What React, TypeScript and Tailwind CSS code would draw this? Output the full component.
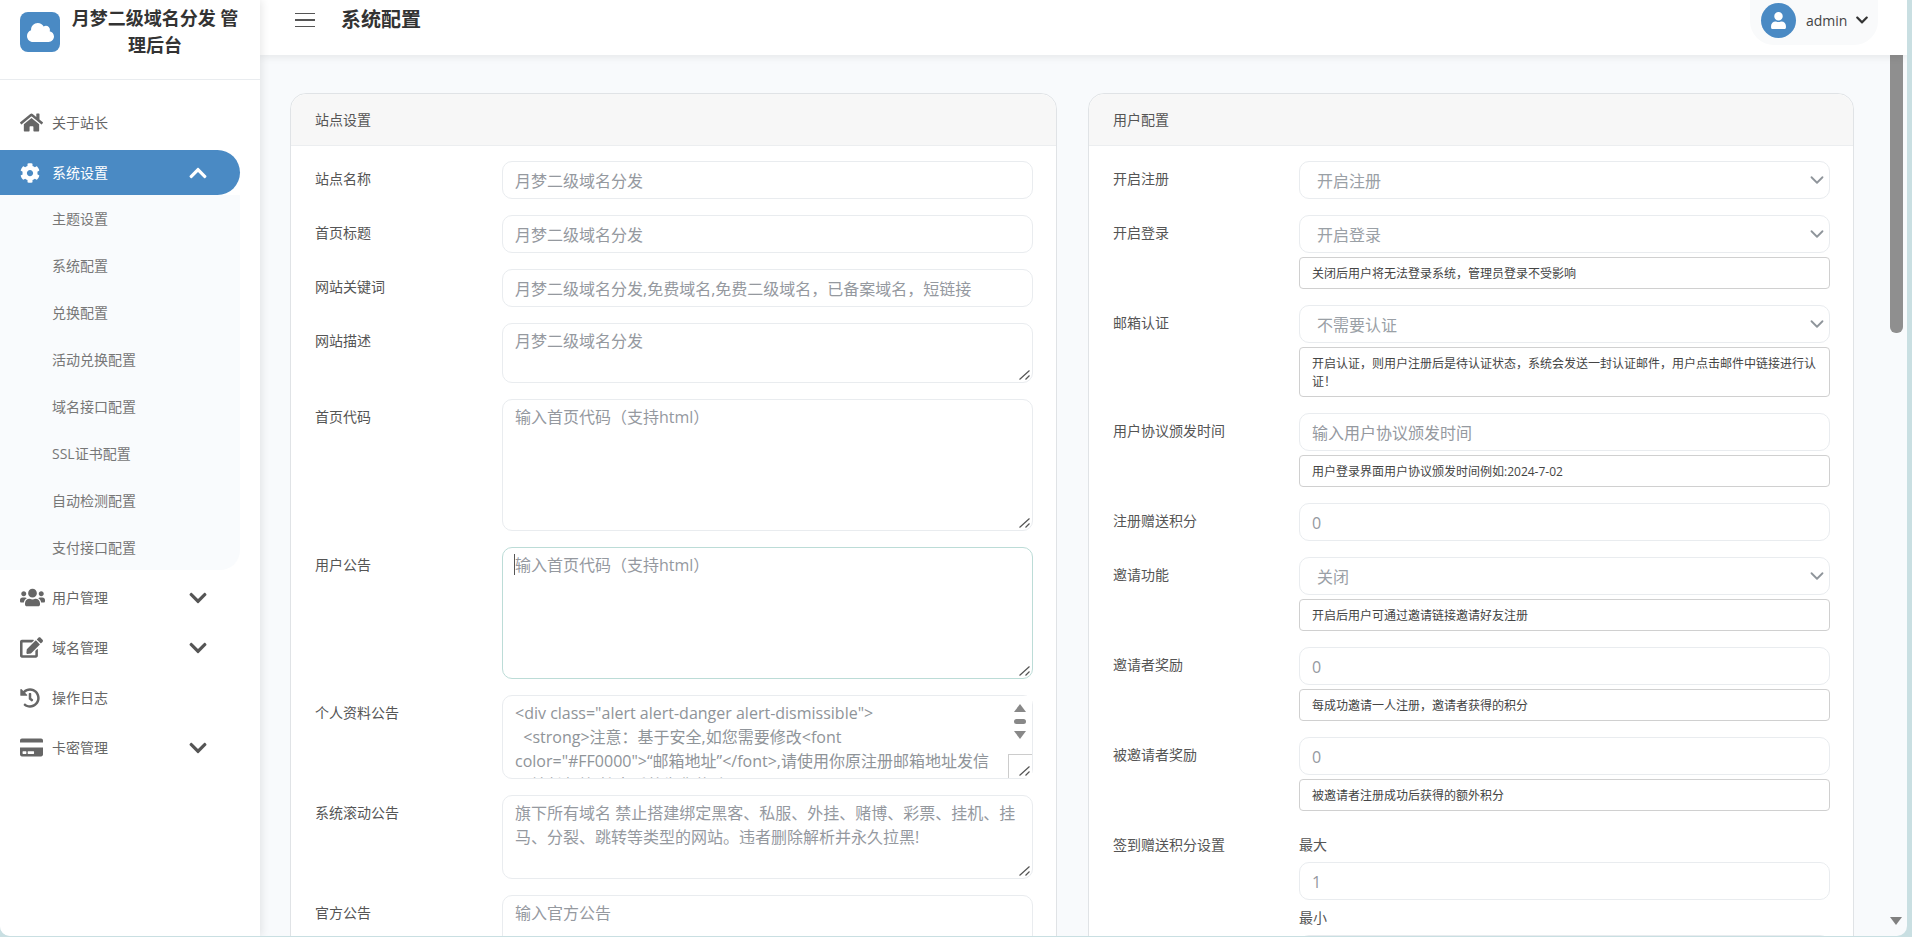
import {
  FaChevronDown,
  FaChevronUp,
  FaCloud,
  FaCog,
  FaCreditCard,
  FaEdit,
  FaHistory,
  FaHome,
  FaUser,
  FaUsers,
} from "react-icons/fa";
import { ChevronDown } from "lucide-react";

const subMenu = [
  "主题设置",
  "系统配置",
  "兑换配置",
  "活动兑换配置",
  "域名接口配置",
  "SSL证书配置",
  "自动检测配置",
  "支付接口配置",
];

const profileNotice = `<div class="alert alert-danger alert-dismissible">
  <strong>注意：基于安全,如您需要修改<font color="#FF0000">“邮箱地址”</font>,请使用你原注册邮箱地址发信至站长邮箱,核实后将为您修改。</strong>
</div>`;

const fieldClass =
  "block h-[38px] w-full rounded-[10px] border border-[#e9ecef] bg-white px-3 pt-[2px] text-base text-[#9aa0a6] outline-none placeholder:text-[#95999f]";
const areaClass =
  "block w-full resize-none rounded-[10px] border bg-white px-3 pt-[5px] text-base leading-6 text-[#8f9499] outline-none placeholder:text-[#95999f]";

const NavItem = ({
  icon,
  label,
  arrow,
}: {
  icon: React.ReactNode;
  label: string;
  arrow?: boolean;
}) => (
  <div className="mt-[5px] flex h-[45px] w-[240px] items-center pl-5 text-sm text-[#666]">
    <span className="flex w-8 items-center">{icon}</span>
    <span className="flex-1">{label}</span>
    {arrow && <FaChevronDown size={20} className="mr-[32px] text-[#555]" />}
  </div>
);

const Sidebar = () => (
  <aside className="relative z-20 flex h-full w-[260px] shrink-0 flex-col bg-white shadow-[2px_0_8px_rgba(0,0,0,0.09)]">
    <div className="flex h-[80px] items-start border-b border-[#e9ecef] pl-5 pt-[12px]">
      <div className="flex h-10 w-10 shrink-0 items-center justify-center rounded-lg bg-[#4a8ac4]">
        <FaCloud size={27} className="text-white" />
      </div>
      <div className="ml-[10px] -mt-[7px] w-[170px] text-center text-lg font-bold leading-[27px] text-[#333]">
        月梦二级域名分发 管理后台
      </div>
    </div>
    <nav className="pt-[15px]">
      <NavItem icon={<FaHome size={23} />} label="关于站长" />
      <div className="mt-[5px] flex h-[45px] w-[240px] items-center rounded-r-full bg-[#4a8ac4] pl-5 text-sm text-white">
        <span className="flex w-8 items-center">
          <FaCog size={20} />
        </span>
        <span className="flex-1">系统设置</span>
        <FaChevronUp size={20} className="mr-[32px]" />
      </div>
      <div className="h-[375px] w-[240px] rounded-br-[20px] bg-[#f9fbfd]">
        {subMenu.map((item) => (
          <div key={item} className="flex h-[47px] items-center pl-[52px] text-sm text-[#777]">
            {item}
          </div>
        ))}
      </div>
      <NavItem icon={<FaUsers size={25} />} label="用户管理" arrow />
      <NavItem icon={<FaEdit size={23} />} label="域名管理" arrow />
      <NavItem icon={<FaHistory size={20} />} label="操作日志" />
      <NavItem icon={<FaCreditCard size={23} />} label="卡密管理" arrow />
    </nav>
  </aside>
);

const Header = () => (
  <header className="relative z-10 flex h-[55px] shrink-0 items-start justify-between bg-white pl-[35px] pr-[29px] shadow-[0_2px_8px_rgba(0,0,0,0.08)]">
    <div className="flex h-10 items-center">
      <div className="flex w-5 flex-col gap-[5px]">
        <span className="h-[1.5px] bg-[#555]" />
        <span className="h-[1.5px] bg-[#555]" />
        <span className="h-[1.5px] bg-[#555]" />
      </div>
      <h1 className="ml-[26px] text-xl font-semibold text-[#333]">系统配置</h1>
    </div>
    <div className="flex h-[45px] w-[128px] items-start rounded-b-[24px] bg-[#f9fafb] pl-[11px] pt-[3px]">
      <div className="flex h-[35px] w-[35px] items-center justify-center rounded-full bg-[#4a8ac4]">
        <FaUser size={17} className="text-white" />
      </div>
      <span className="ml-[10px] mt-[8px] text-sm text-[#444]">admin</span>
      <FaChevronDown size={14} className="ml-[8px] mt-[10px] text-[#333]" />
    </div>
  </header>
);

const Card = ({ title, children }: { title: string; children: React.ReactNode }) => (
  <section className="rounded-t-[16px] border border-[#e0e3e6] bg-white">
    <div className="flex h-[52px] items-center rounded-t-[16px] border-b border-[#eceef0] bg-[#f7f7f7] pl-[24px] text-sm text-[#555]">
      {title}
    </div>
    <div className="flex flex-col gap-4 pb-10 pl-[24px] pr-[23px] pt-[15px]">{children}</div>
  </section>
);

const Row = ({
  label,
  width,
  children,
}: {
  label: string;
  width: string;
  children: React.ReactNode;
}) => (
  <div className="flex items-start">
    <label className={`${width} shrink-0 pt-[7px] text-sm leading-[21px] text-[#555]`}>{label}</label>
    <div className="min-w-0 flex-1">{children}</div>
  </div>
);

const Select = ({ value }: { value: string }) => (
  <div className="relative">
    <select
      defaultValue={value}
      className="block h-[38px] w-full appearance-none rounded-[10px] border border-[#e9ecef] bg-white pl-[17px] pt-[2px] text-base text-[#9aa0a6] outline-none"
    >
      <option>{value}</option>
    </select>
    <ChevronDown
      size={22}
      strokeWidth={2}
      className="pointer-events-none absolute right-[2px] top-[8px] text-[#8f959b]"
    />
  </div>
);

const Help = ({ children }: { children: React.ReactNode }) => (
  <div className="mt-1 rounded border border-[#d0d0d0] bg-white px-3 pb-[5px] pt-[7px] text-xs leading-[18px] text-[#444]">
    {children}
  </div>
);

const Input = ({ placeholder }: { placeholder: string }) => (
  <input className={fieldClass} placeholder={placeholder} />
);

const Grip = () => (
  <svg
    width="11"
    height="10"
    viewBox="0 0 11 10"
    className="pointer-events-none absolute bottom-[3px] right-[3px] text-[#555]"
  >
    <path d="M0.5 9.5 L10.5 0.5 M6.5 9.5 L10.5 5.5" stroke="currentColor" strokeWidth="1.2" fill="none" />
  </svg>
);

const Area = ({
  height,
  placeholder,
  focused,
}: {
  height: string;
  placeholder: string;
  focused?: boolean;
}) => (
  <div className="relative">
    <textarea
      className={`${areaClass} ${height} ${focused ? "border-[#bcdcd7]" : "border-[#e9ecef]"}`}
      placeholder={placeholder}
    />
    {focused && <span className="absolute left-[12px] top-[7px] h-[21px] w-px bg-[#555]" />}
    <Grip />
  </div>
);

const LeftColumn = () => (
  <Card title="站点设置">
    <Row width="w-[187px]" label="站点名称">
      <Input placeholder="月梦二级域名分发" />
    </Row>
    <Row width="w-[187px]" label="首页标题">
      <Input placeholder="月梦二级域名分发" />
    </Row>
    <Row width="w-[187px]" label="网站关键词">
      <Input placeholder="月梦二级域名分发,免费域名,免费二级域名，已备案域名，短链接" />
    </Row>
    <Row width="w-[187px]" label="网站描述">
      <Area height="h-[60px]" placeholder="月梦二级域名分发" />
    </Row>
    <Row width="w-[187px]" label="首页代码">
      <Area height="h-[132px]" placeholder="输入首页代码（支持html）" />
    </Row>
    <Row width="w-[187px]" label="用户公告">
      <Area height="h-[132px]" placeholder="输入首页代码（支持html）" focused />
    </Row>
    <Row width="w-[187px]" label="个人资料公告">
      <div className="relative">
        <textarea
          readOnly
          defaultValue={profileNotice}
          className={`${areaClass} h-[84px] overflow-hidden border-[#e9ecef] pr-[36px]`}
        />
        <div className="pointer-events-none absolute right-[1px] top-[1px] flex h-[82px] w-6 flex-col items-center bg-white pt-[8px]">
          <span className="h-0 w-0 border-x-[6px] border-b-[8px] border-x-transparent border-b-[#888]" />
          <span className="mt-[7px] h-[5px] w-3 rounded-full bg-[#888]" />
          <span className="mt-[7px] h-0 w-0 border-x-[6px] border-t-[8px] border-x-transparent border-t-[#888]" />
          <span className="absolute bottom-0 left-0 h-6 w-6 border-l border-t border-[#ccc]" />
        </div>
        <Grip />
      </div>
    </Row>
    <Row width="w-[187px]" label="系统滚动公告">
      <Area
        height="h-[84px]"
        placeholder="旗下所有域名 禁止搭建绑定黑客、私服、外挂、赌博、彩票、挂机、挂马、分裂、跳转等类型的网站。违者删除解析并永久拉黑!"
      />
    </Row>
    <Row width="w-[187px]" label="官方公告">
      <Area height="h-[84px]" placeholder="输入官方公告" />
    </Row>
  </Card>
);

const RightColumn = () => (
  <Card title="用户配置">
    <Row width="w-[186px]" label="开启注册">
      <Select value="开启注册" />
    </Row>
    <Row width="w-[186px]" label="开启登录">
      <Select value="开启登录" />
      <Help>关闭后用户将无法登录系统，管理员登录不受影响</Help>
    </Row>
    <Row width="w-[186px]" label="邮箱认证">
      <Select value="不需要认证" />
      <Help>开启认证，则用户注册后是待认证状态，系统会发送一封认证邮件，用户点击邮件中链接进行认证！</Help>
    </Row>
    <Row width="w-[186px]" label="用户协议颁发时间">
      <Input placeholder="输入用户协议颁发时间" />
      <Help>用户登录界面用户协议颁发时间例如:2024-7-02</Help>
    </Row>
    <Row width="w-[186px]" label="注册赠送积分">
      <Input placeholder="0" />
    </Row>
    <Row width="w-[186px]" label="邀请功能">
      <Select value="关闭" />
      <Help>开启后用户可通过邀请链接邀请好友注册</Help>
    </Row>
    <Row width="w-[186px]" label="邀请者奖励">
      <Input placeholder="0" />
      <Help>每成功邀请一人注册，邀请者获得的积分</Help>
    </Row>
    <Row width="w-[186px]" label="被邀请者奖励">
      <Input placeholder="0" />
      <Help>被邀请者注册成功后获得的额外积分</Help>
    </Row>
    <Row width="w-[186px]" label="签到赠送积分设置">
      <div className="py-[7px] text-sm leading-[21px] text-[#555]">最大</div>
      <Input placeholder="1" />
      <div className="py-[7px] text-sm leading-[21px] text-[#555]">最小</div>
      <Input placeholder="1" />
    </Row>
  </Card>
);

const App = () => {
  return (
    <div className="h-screen w-screen overflow-hidden bg-[#c9dfe2] font-['Open_Sans','Noto_Sans_CJK_SC',sans-serif]">
      <div className="flex h-[936px] w-[1907px] overflow-hidden rounded-b-[10px] bg-[#f8fafc]">
        <Sidebar />
        <main className="relative flex min-w-0 flex-1 flex-col">
          <Header />
          <div className="min-h-0 flex-1 overflow-hidden pl-[30px] pt-[38px]">
            <div className="grid grid-cols-[767px_766px] gap-x-[31px]">
              <LeftColumn />
              <RightColumn />
            </div>
          </div>
          <div className="absolute right-[4px] top-[55px] z-0 h-[278px] w-[13px] rounded-b-md bg-[#8f8f8f]" />
          <span className="absolute bottom-[11px] right-[5px] h-0 w-0 border-x-[6px] border-t-[8px] border-x-transparent border-t-[#808080]" />
        </main>
      </div>
    </div>
  );
};

export default App;
